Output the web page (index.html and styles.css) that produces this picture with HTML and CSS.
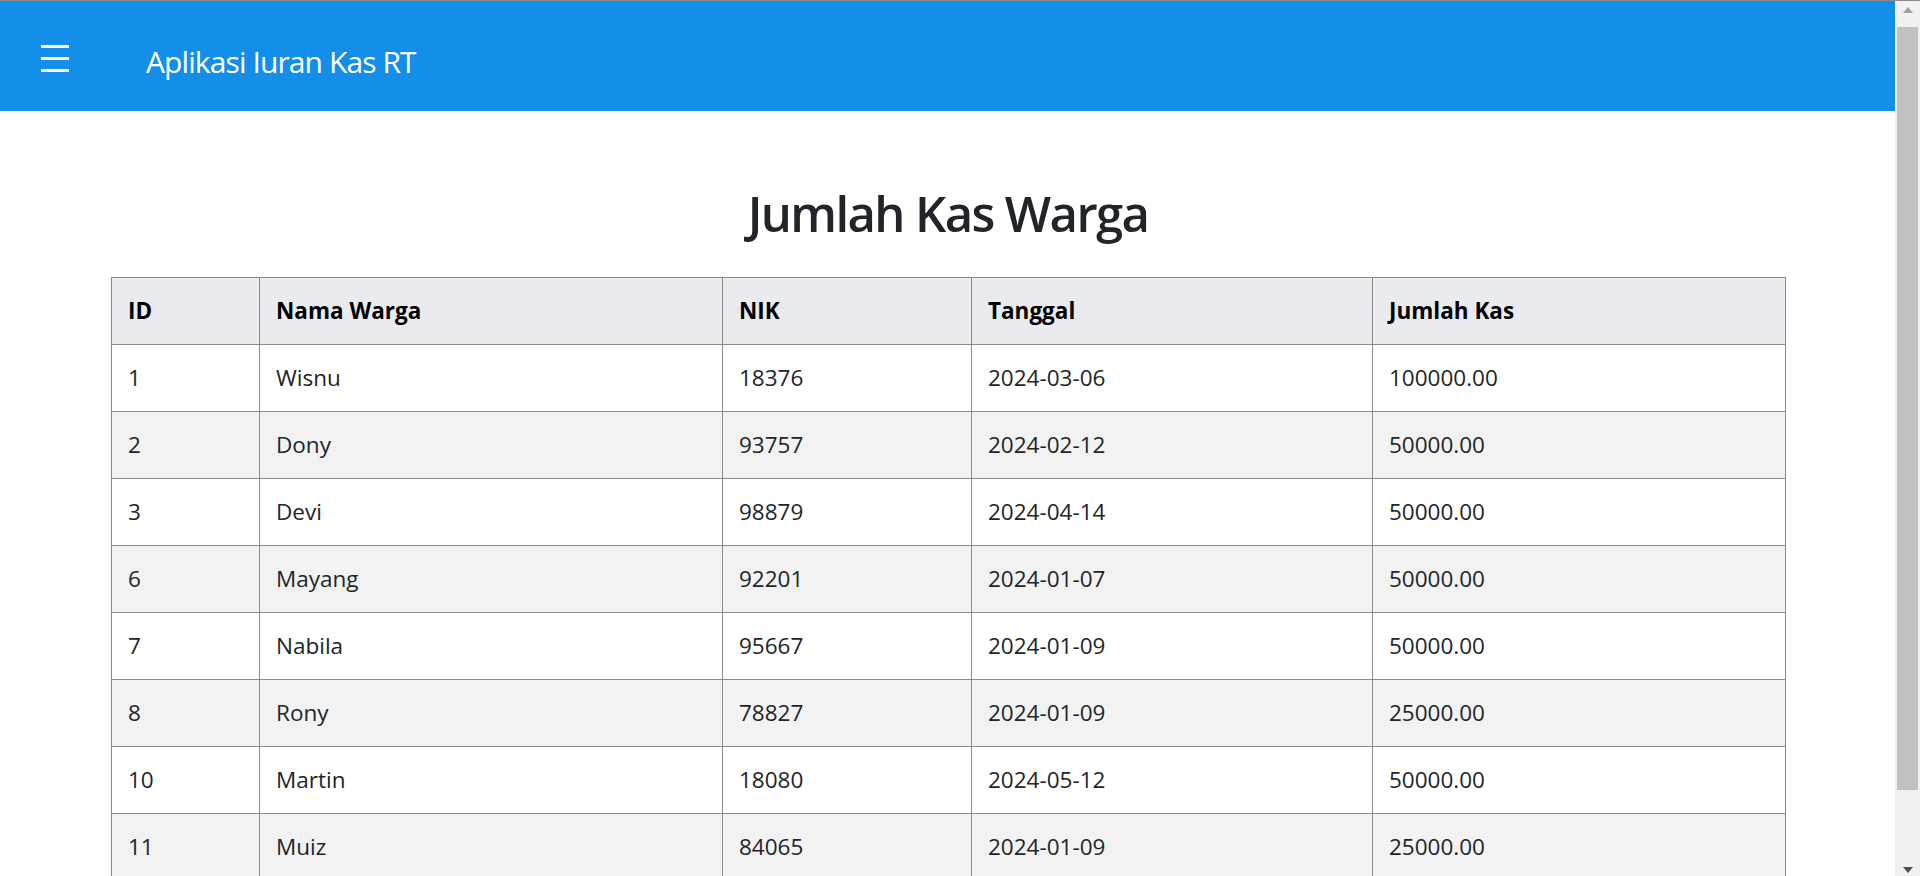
FILE: index.html
```html
<!DOCTYPE html>
<html lang="id">
<head>
<meta charset="utf-8">
<title>Aplikasi Iuran Kas RT</title>
<link rel="stylesheet" href="styles.css">
</head>
<body>
<div class="window">
  <div class="page">
    <nav class="navbar">
      <button class="menu-btn" aria-label="Menu">
        <svg width="28" height="27" viewBox="0 0 28 27"><rect x="0" y="0" width="28" height="3" fill="#fff"/><rect x="0" y="12" width="28" height="3" fill="#fff"/><rect x="0" y="24" width="28" height="3" fill="#fff"/></svg>
      </button>
      <span class="brand">Aplikasi Iuran Kas RT</span>
    </nav>
    <main class="content">
      <h1 class="title">Jumlah Kas Warga</h1>
      <table class="kas-table">
        <colgroup>
          <col class="c-id"><col class="c-nama"><col class="c-nik"><col class="c-tgl"><col class="c-jml">
        </colgroup>
        <thead>
          <tr><th>ID</th><th>Nama Warga</th><th>NIK</th><th>Tanggal</th><th>Jumlah Kas</th></tr>
        </thead>
        <tbody>
          <tr><td>1</td><td>Wisnu</td><td>18376</td><td>2024-03-06</td><td>100000.00</td></tr>
          <tr><td>2</td><td>Dony</td><td>93757</td><td>2024-02-12</td><td>50000.00</td></tr>
          <tr><td>3</td><td>Devi</td><td>98879</td><td>2024-04-14</td><td>50000.00</td></tr>
          <tr><td>6</td><td>Mayang</td><td>92201</td><td>2024-01-07</td><td>50000.00</td></tr>
          <tr><td>7</td><td>Nabila</td><td>95667</td><td>2024-01-09</td><td>50000.00</td></tr>
          <tr><td>8</td><td>Rony</td><td>78827</td><td>2024-01-09</td><td>25000.00</td></tr>
          <tr><td>10</td><td>Martin</td><td>18080</td><td>2024-05-12</td><td>50000.00</td></tr>
          <tr><td>11</td><td>Muiz</td><td>84065</td><td>2024-01-09</td><td>25000.00</td></tr>
        </tbody>
      </table>
    </main>
  </div>
  <div class="scrollbar">
    <div class="sb-btn"><span class="arrow-up"></span></div>
    <div class="sb-track"><div class="sb-thumb"></div></div>
    <div class="sb-btn"><span class="arrow-down"></span></div>
  </div>
</div>
</body>
</html>
```
FILE: styles.css
```css
html, body {
  margin: 0;
  padding: 0;
}
body {
  font-family: "Open Sans", "Noto Sans", sans-serif;
  color: #212529;
  background: #fff;
  border-top: 1px solid #8b8b8b;
  height: 875px;
  overflow: hidden;
}
.window {
  display: flex;
  height: 875px;
}
.page {
  flex: 1;
  overflow: hidden;
  min-width: 0;
}
.navbar {
  height: 110px;
  background: #138fea;
  display: flex;
  align-items: center;
  padding: 10px 0 0 41px;
  box-sizing: border-box;
}
.menu-btn {
  border: 0;
  background: none;
  padding: 0;
  margin: 0 77px 6px 0;
  display: flex;
}
.brand {
  color: #fff;
  font-size: 30px;
  line-height: 45px;
  letter-spacing: -0.9px;
  white-space: nowrap;
}
.content {
  padding: 72px 110px 0 111px;
}
.title {
  margin: 0 0 34px;
  text-align: center;
  font-size: 49px;
  line-height: 60px;
  font-weight: 600;
  letter-spacing: -1.6px;
  color: #212529;
}
.kas-table {
  width: 100%;
  border-collapse: collapse;
  table-layout: fixed;
  font-size: 22.5px;
  line-height: 34px;
}
.c-id { width: 148px; }
.c-nama { width: 463px; }
.c-nik { width: 249px; }
.c-tgl { width: 401px; }
.c-jml { width: 413px; }
.kas-table th,
.kas-table td {
  border: 1px solid #8a8a8a;
  padding: 16px 16px;
  text-align: left;
  white-space: nowrap;
}
.kas-table th {
  background: #eaebef;
  color: #000;
  font-weight: 700;
}
.kas-table tbody tr:nth-child(even) td {
  background: #f2f2f2;
}
.scrollbar {
  width: 25px;
  background: #f1f1f1;
  display: flex;
  flex-direction: column;
}
.sb-btn {
  height: 25px;
  display: flex;
  align-items: center;
  justify-content: center;
}
.arrow-up {
  width: 0;
  height: 0;
  border-left: 5px solid transparent;
  border-right: 5px solid transparent;
  border-bottom: 6px solid #a3a3a3;
  margin: 0 0 8px 0;
}
.arrow-down {
  width: 0;
  height: 0;
  border-left: 5px solid transparent;
  border-right: 5px solid transparent;
  border-top: 6px solid #505050;
  margin: 12px 0 0 0;
}
.sb-track {
  flex: 1;
  padding: 1px 2px 0;
}
.sb-thumb {
  height: 763px;
  background: #c1c1c1;
}
```
